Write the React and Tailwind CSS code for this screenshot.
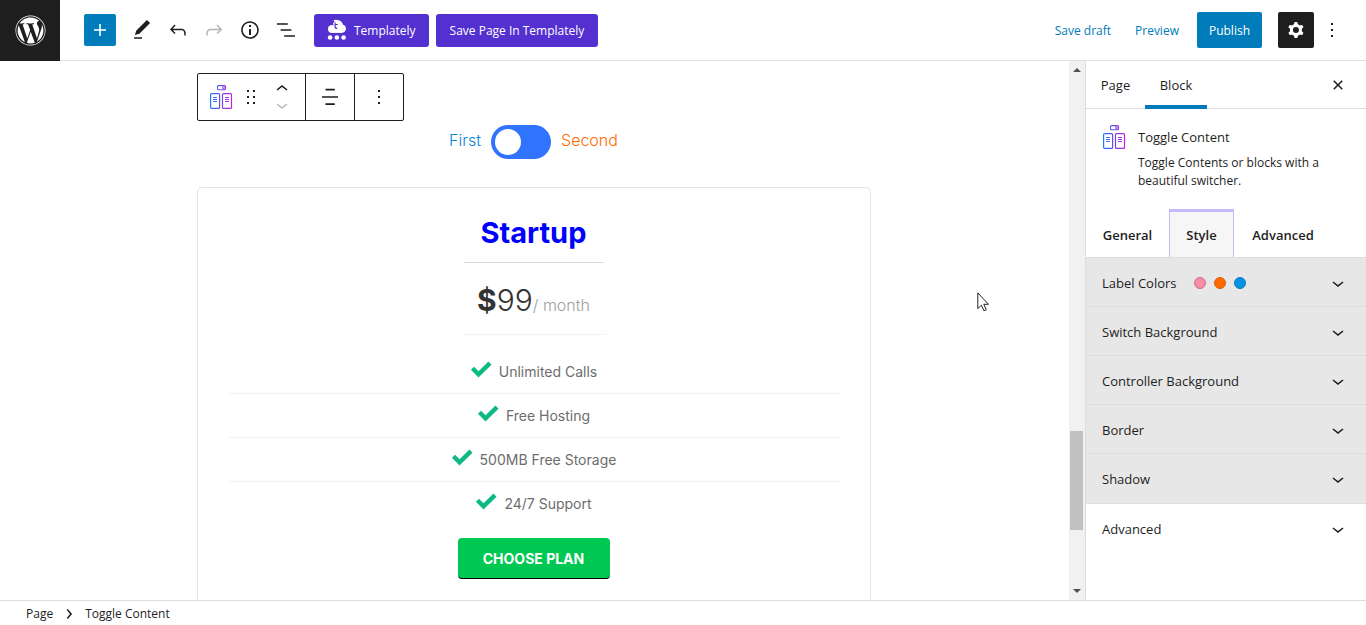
import { FaWordpress } from "react-icons/fa";

const PATHS = {
  plus: "M18 11.2h-5.2V6h-1.6v5.2H6v1.6h5.2V18h1.6v-5.2H18z",
  edit: "M20.1 5.1L16.9 2 6.2 12.7l-1.3 4.4 4.5-1.3L20.1 5.1zM4 20.8h8v-1.5H4v1.5z",
  undo: "M18.3 11.7c-.6-.6-1.4-.9-2.3-.9H6.7l2.9-3.3-1.1-1-4.5 5L8.5 16l1-1-2.7-2.7H16c.5 0 .9.2 1.3.5 1 1 1 3.4 1 4.5v.3h1.5v-.2c0-1.5 0-4.3-1.5-5.7z",
  redo: "M15.6 6.5l-1.1 1 2.9 3.3H8c-.9 0-1.7.3-2.3.9-1.4 1.5-1.4 4.2-1.4 5.6v.2h1.5v-.3c0-1.1 0-3.5 1-4.5.3-.3.7-.5 1.3-.5h9.2L14.5 15l1.1 1.1 4.6-4.6-4.6-5z",
  info: "M12 3.2c-4.8 0-8.8 3.9-8.8 8.8 0 4.8 3.9 8.8 8.8 8.8 4.8 0 8.8-3.9 8.8-8.8 0-4.8-4-8.8-8.8-8.8zm0 16c-4 0-7.2-3.3-7.2-7.2C4.8 8 8 4.8 12 4.8s7.2 3.3 7.2 7.2c0 4-3.2 7.2-7.2 7.2zM11 17h2v-6h-2v6zm0-8h2V7h-2v2z",
  list: "M13.8 5.2H3v1.5h10.8V5.2zm-3.6 12v1.5H21v-1.5H10.2zm7.2-6H6.6v1.5h10.8v-1.5z",
  cog: "M10.289 4.836A1 1 0 0111.275 4h1.306a1 1 0 01.987.836l.244 1.466c.787.26 1.503.679 2.108 1.218l1.393-.522a1 1 0 011.216.437l.653 1.13a1 1 0 01-.23 1.273l-1.148.944a6.025 6.025 0 010 2.435l1.149.946a1 1 0 01.23 1.272l-.653 1.13a1 1 0 01-1.216.437l-1.394-.522c-.605.54-1.32.958-2.108 1.218l-.244 1.466a1 1 0 01-.987.836h-1.306a1 1 0 01-.986-.836l-.244-1.466a5.995 5.995 0 01-2.108-1.218l-1.394.522a1 1 0 01-1.217-.436l-.653-1.131a1 1 0 01.23-1.272l1.149-.946a6.026 6.026 0 010-2.435l-1.148-.944a1 1 0 01-.23-1.272l.653-1.131a1 1 0 011.217-.437l1.393.522a5.994 5.994 0 012.108-1.218l.244-1.466zM14.929 12a3 3 0 11-6 0 3 3 0 016 0z",
  more: "M13 19h-2v-2h2v2zm0-6h-2v-2h2v2zm0-6h-2V5h2v2z",
  close: "M12 13.06l3.712 3.713 1.061-1.06L13.061 12l3.712-3.712-1.06-1.06L12 10.938 8.288 7.227l-1.061 1.06L10.939 12l-3.712 3.712 1.06 1.061L12 13.061z",
  up: "M6.5 12.4L12 8l5.5 4.4-.9 1.2L12 10l-4.5 3.6-1-1.2z",
  down: "M17.5 11.6L12 16l-5.5-4.4.9-1.2L12 14l4.5-3.6 1 1.2z",
  right: "M10.8 17.1L9.7 16.1l3.4-4.1-3.4-4.1 1.1-1 4.3 5.1z",
  align: "M7.5 3.8h9.3v1.8H7.5zM4 11.2h16v1.6H4zM7.5 18.2h9.3v1.8H7.5z",
};

function Icon({ name, className = "size-6" }) {
  return (
    <svg viewBox="0 0 24 24" className={className} fill="currentColor" fillRule="evenodd" aria-hidden="true">
      <path d={PATHS[name]} />
    </svg>
  );
}

function IconButton({ name, label, className = "w-9", iconClass }) {
  return (
    <button type="button" aria-label={label} className={`flex h-9 shrink-0 items-center justify-center ${className}`}>
      <Icon name={name} className={iconClass} />
    </button>
  );
}

function ToggleContentIcon({ id }) {
  return (
    <svg viewBox="0 0 24 24" className="size-6 shrink-0" fill="none" stroke={`url(#${id})`} aria-hidden="true">
      <defs>
        <linearGradient id={id} gradientUnits="userSpaceOnUse" x1="1" y1="14" x2="23" y2="14">
          <stop offset="0" stopColor="#1f7bff" />
          <stop offset="0.5" stopColor="#6a4be6" />
          <stop offset="1" stopColor="#c21fe0" />
        </linearGradient>
      </defs>
      <rect x="8.5" y="0.6" width="8" height="4.2" rx="1" strokeWidth="1.1" />
      <path d="M13.6 1.8h1.7v1.8h-1.7z" strokeWidth="0.8" />
      <rect x="1.6" y="8.6" width="9" height="14.8" rx="1" strokeWidth="1.2" />
      <rect x="13.5" y="8.6" width="9" height="14.8" rx="1" strokeWidth="1.2" />
      <path d="M4 12.5h4M4 14.500h4M4 16.5h4M16 12.5h4M16 14.5h4M16 16.5h4" strokeWidth="1" />
    </svg>
  );
}

function TemplatelyLogo() {
  return (
    <svg viewBox="0 0 20 22" className="h-[22px] w-5 shrink-0" aria-hidden="true">
      <g fill="#fff">
        <circle cx="10.8" cy="6.200" r="5" />
        <circle cx="14.8" cy="9.600" r="4.200" />
        <circle cx="5" cy="10" r="4" />
        <path d="M5 8h10v5.900H5z" />
        <path d="M6.300 1.400c2-.9 4-.7 5.200.4L9 4.500C8.500 2.900 7.500 1.900 6.300 1.400z" />
        <circle cx="3.100" cy="18.500" r="2.300" />
        <circle cx="9.900" cy="18.500" r="2.300" />
        <circle cx="16.600" cy="18.500" r="2.300" />
      </g>
      <path d="M8.100 3.400v4c0 1.400.7 2 2.100 2M8.100 5.500h2.700M1.800 6.200c1.500-1.200 3.300-1.200 4.600-.2" fill="none" stroke="#5430d0" strokeWidth="1.200" />
    </svg>
  );
}

function Header() {
  return (
    <header className="flex h-[61px] shrink-0 items-center border-b border-[#e0e0e0] text-[12px] text-[#1e1e1e]">
      <a href="#dashboard" aria-label="View pages" className="flex h-[61px] w-[60px] shrink-0 items-center justify-center bg-[#1e1e1e] text-white">
        <FaWordpress className="size-[31px]" />
      </a>
      <div className="flex items-center pl-6">
        <button type="button" aria-label="Add block" className="mr-2 flex size-8 items-center justify-center rounded-xs bg-[#007cba] text-white">
          <Icon name="plus" />
        </button>
        <IconButton name="edit" label="Tools" />
        <IconButton name="undo" label="Undo" />
        <IconButton name="redo" label="Redo" className="w-9 text-[#b5b5b5]" />
        <IconButton name="info" label="Details" />
        <IconButton name="list" label="List view" />
      </div>
      <div className="ml-2.5 flex gap-[7px] text-white">
        <button type="button" className="flex h-[33px] items-center gap-[7px] rounded-[3px] bg-[#5430d0] px-[13px]">
          <TemplatelyLogo />
          <span className="pt-0.5">Templately</span>
        </button>
        <button type="button" className="h-[33px] rounded-[3px] bg-[#5430d0] px-3.5 pt-0.5">
          Save Page In Templately
        </button>
      </div>
      <div className="ml-auto flex items-center pr-4">
        <button type="button" className="mr-6 pt-0.5 text-[#007cba]">Save draft</button>
        <button type="button" className="mr-[18px] pt-0.5 text-[#007cba]">Preview</button>
        <button type="button" className="mr-4 h-9 rounded-xs bg-[#007cba] px-3 pt-0.5 text-white">Publish</button>
        <IconButton name="cog" label="Settings" className="w-9 rounded-xs bg-[#1e1e1e] text-white" />
        <IconButton name="more" label="Options" />
      </div>
    </header>
  );
}

function BlockToolbar() {
  return (
    <div role="toolbar" aria-label="Block tools" className="flex h-12 w-[207px] rounded-xs border border-[#1e1e1e] bg-white text-[#1e1e1e]">
      <div className="flex w-[108px] items-center border-r border-[#1e1e1e] pl-[11px]">
        <button type="button" aria-label="Toggle Content">
          <ToggleContentIcon id="toolbarGradient" />
        </button>
        <button type="button" aria-label="Drag" className="ml-[9px]">
          <svg viewBox="0 0 18 18" className="size-[18px]" fill="currentColor" aria-hidden="true">
            <path d="M5 4h2V2H5v2zm6-2v2h2V2h-2zm-6 8h2V8H5v2zm6 0h2V8h-2v2zm-6 6h2v-2H5v2zm6 0h2v-2h-2v2z" />
          </svg>
        </button>
        <div className="ml-2.5 flex flex-col">
          <button type="button" aria-label="Move up" className="flex h-4 items-center overflow-hidden">
            <Icon name="up" />
          </button>
          <button type="button" aria-label="Move down" className="flex h-4 items-center overflow-hidden text-[#bbb]">
            <Icon name="down" />
          </button>
        </div>
      </div>
      <button type="button" aria-label="Align" className="flex w-[49px] items-center justify-center border-r border-[#1e1e1e]">
        <Icon name="align" />
      </button>
      <button type="button" aria-label="More options" className="flex flex-1 items-center justify-center">
        <Icon name="more" />
      </button>
    </div>
  );
}

const FEATURES = ["Unlimited Calls", "Free Hosting", "500MB Free Storage", "24/7 Support"];

function PricingCard() {
  return (
    <article className="mt-7 flex flex-col items-center rounded-[5px] border border-[#e5e5e5] px-[30px] pt-6 pb-10">
      <h2 className="w-[140px] border-b border-[#d9d9d9] pb-2 text-center text-[29px] leading-[42px] font-bold text-[#0000ff]">Startup</h2>
      <p className="flex h-[72px] w-[144px] items-center justify-center border-b border-[#f2f2f2] pt-0.5 text-[#a0a0a0]">
        <span className="flex items-baseline">
          <span className="text-[30px] leading-10 font-bold text-[#333]">$</span>
          <span className="text-[30px] leading-10 font-light text-[#333]">99</span>
          <span className="text-base font-light">/ month</span>
        </span>
      </p>
      <ul className="mt-[15px] w-full text-[14px] text-[#6d6d6d]">
        {FEATURES.map((f) => (
          <li key={f} className="flex h-11 items-center justify-center gap-[7px] border-b border-[#f2f2f2] last:border-transparent">
            <svg viewBox="0 0 22 18" className="mb-1.5 h-[18px] w-[22px]" fill="none" stroke="#0dba84" strokeWidth="4.4" aria-hidden="true">
              <path d="M2.5 8.3l6 6L20 3.2" />
            </svg>
            {f}
          </li>
        ))}
      </ul>
      <button type="button" className="mt-3 h-[41px] w-[152px] rounded-[4px] border-b border-black bg-[#00c853] text-[14px] font-bold text-white">CHOOSE PLAN</button>
    </article>
  );
}

function Canvas() {
  return (
    <main className="relative min-w-0 flex-1 overflow-hidden pr-0.5">
      <div className="mx-auto w-full max-w-[674px] pt-3 font-['Inter',sans-serif]">
        <BlockToolbar />
        <div className="mt-1 flex items-center justify-center gap-2.5 text-base font-light">
          <label htmlFor="switcher" className="pb-1 text-[#0a84d6]">First</label>
          <input
            id="switcher"
            type="checkbox"
            role="switch"
            className="h-[34px] w-[60px] appearance-none rounded-full bg-[#2f73ff] p-1 before:block before:size-[26px] before:rounded-full before:bg-white"
          />
          <label htmlFor="switcher" className="pb-1 text-[#ff6900]">Second</label>
        </div>
        <PricingCard />
      </div>
      <svg viewBox="0 0 12 20" className="absolute top-[231px] left-[977px] h-5 w-3" fill="#fff" stroke="#222" aria-hidden="true">
        <path d="M.8.9v15.7l3.6-3.4 2.5 5.6 2.4-1-2.5-5.5h4.700z" />
      </svg>
    </main>
  );
}

function Scrollbar() {
  return (
    <div aria-hidden="true" className="flex w-4 shrink-0 flex-col items-center bg-[#f1f1f1] py-[7px] pr-px">
      <svg viewBox="0 0 8 4" className="h-1 w-2" fill="#505050"><path d="M4 0l4 4H0z" /></svg>
      <div className="flex-[359]" />
      <div className="h-[99px] w-[13px] bg-[#c1c1c1]" />
      <div className="flex-[59]" />
      <svg viewBox="0 0 8 4" className="h-1 w-2" fill="#505050"><path d="M0 0h8L4 4z" /></svg>
    </div>
  );
}

const PANELS = [
  { title: "Label Colors", swatches: true },
  { title: "Switch Background" },
  { title: "Controller Background" },
  { title: "Border" },
  { title: "Shadow" },
];

function Panel({ title, swatches, className }) {
  return (
    <button type="button" aria-expanded="false" className={`flex h-[49px] w-full items-center border-b px-4 pt-0.5 font-medium ${className}`}>
      <span className="pt-0.5">{title}</span>
      {swatches && (
        <span className="ml-[17px] flex gap-2">
          <span className="size-3 rounded-full border border-[#d0708c] bg-[#f78da7]" />
          <span className="size-3 rounded-full border border-[#d95f0c] bg-[#ff6900]" />
          <span className="size-3 rounded-full border border-[#0a78c0] bg-[#0693e3]" />
        </span>
      )}
      <Icon name="down" className="ml-auto size-6" />
    </button>
  );
}

function Sidebar() {
  return (
    <aside className="w-[281px] shrink-0 border-l border-[#ddd] text-[#1e1e1e]">
      <div className="flex h-12 items-stretch border-b border-[#ddd] pr-4">
        <button type="button" className="w-[59px] pt-0.5 font-medium">Page</button>
        <button type="button" className="-mb-px w-[62px] border-b-4 border-[#007cba] pt-1.5 font-medium">Block</button>
        <button type="button" aria-label="Close settings" className="ml-auto">
          <Icon name="close" />
        </button>
      </div>
      <div className="flex h-[100px] gap-3 px-4 pt-4">
        <ToggleContentIcon id="sidebarGradient" />
        <div>
          <h2 className="mb-[5px] leading-6 font-medium">Toggle Content</h2>
          <p className="text-[12px] leading-[18px]">Toggle Contents or blocks with a beautiful switcher.</p>
        </div>
      </div>
      <div role="tablist" className="flex h-[49px] border-b border-[#ddd] font-semibold">
        <button type="button" role="tab" aria-selected="false" className="w-[83px] pt-1.5">General</button>
        <button type="button" role="tab" aria-selected="true" className="w-[65px] border-x border-t-3 border-[#c4b9fb] bg-[#f6f6f6] pt-0.5">Style</button>
        <button type="button" role="tab" aria-selected="false" className="w-[98px] pt-1.5">Advanced</button>
      </div>
      <div className="border-b border-[#ddd] bg-[#e7e7e7]">
        {PANELS.map((p) => (
          <Panel key={p.title} {...p} className="border-[#dcdcdc] last:border-transparent" />
        ))}
      </div>
      <Panel title="Advanced" className="border-transparent" />
    </aside>
  );
}

export default function App() {
  return (
    <div className="flex h-screen flex-col overflow-hidden bg-white font-['Open_Sans',sans-serif] text-[13px]">
      <Header />
      <div className="flex min-h-0 flex-1">
        <Canvas />
        <Scrollbar />
        <Sidebar />
      </div>
      <footer className="flex h-[25px] shrink-0 items-center border-t border-[#ddd] pt-0.5 pl-[26px] text-[12px] text-[#1e1e1e]">
        <nav aria-label="Block breadcrumb" className="flex items-center">
          <a href="#page">Page</a>
          <Icon name="right" className="mx-1 size-6" />
          <span>Toggle Content</span>
        </nav>
      </footer>
    </div>
  );
}
